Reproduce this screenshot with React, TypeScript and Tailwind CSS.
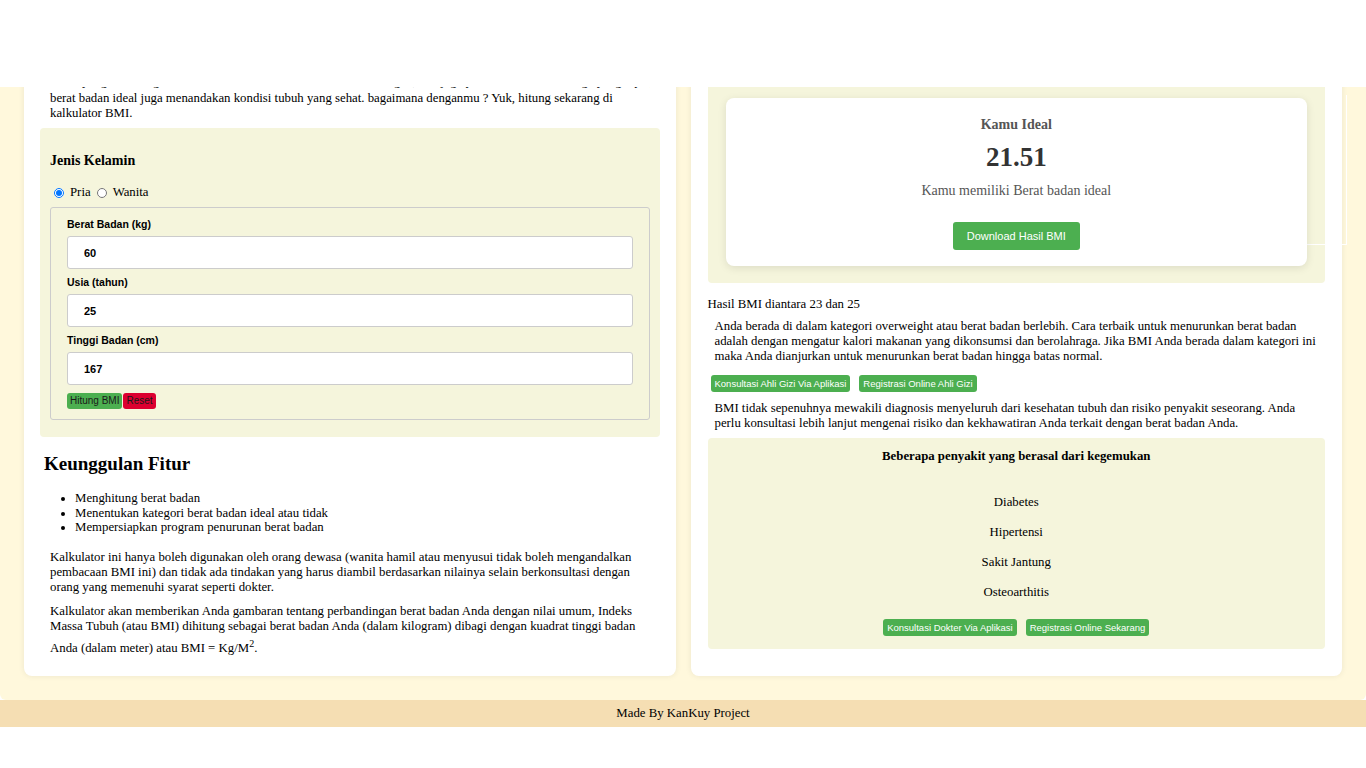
import React from 'react';

const SmallButton = ({ label, className = '' }: { label: string; className?: string }) => (
  <button className={`h-[17px] px-[4px] rounded-[3px] bg-[#4caf50] text-white text-[9.5px] leading-none font-['Liberation_Sans',sans-serif] ${className}`}>
    {label}
  </button>
);

const Field = ({ label, value }: { label: string; value: string }) => (
  <div>
    <label className="block text-[10.5px] font-bold leading-[12px] mb-[6px]">{label}</label>
    <input
      readOnly
      value={value}
      className="block w-full h-[33px] bg-white border border-[#ccc] rounded-[3px] pl-[16px] text-[11px] font-bold outline-none"
    />
  </div>
);

const LeftCard = () => (
  <section className="bg-white rounded-[8px] shadow-[0_0_6px_rgba(0,0,0,0.08)] px-[16px] pt-[16px] pb-[20px]">
    <div className="mt-[6px] pb-[3px] px-[10px] leading-[14px] overflow-hidden">
      <p className="whitespace-nowrap overflow-hidden">Kalkulator BMI membantu kamu mengetahui apakah berat badanmu sudah ideal atau belum sesuai tinggi badan</p>
      <p className="whitespace-nowrap overflow-hidden">Berat badan ideal adalah dambaan setiap orang, selain membuat penampilan lebih menarik dan percaya diri, memiliki</p>
      <p className="whitespace-nowrap overflow-hidden">tubuh yang seimbang membuat aktivitas sehari-hari terasa lebih ringan, menjaga pola makan dan olahraga yang tepat,</p>
    </div>
    <p className="px-[10px] leading-[15px] mb-[7px]">
      berat badan ideal juga menandakan kondisi tubuh yang sehat. bagaimana denganmu ? Yuk, hitung sekarang di kalkulator BMI.
    </p>

    <div className="bg-[#f5f5dc] rounded-[4px] px-[10px] pt-[25px] pb-[17px]">
      <h3 className="text-[14px] font-bold leading-[16px]">Jenis Kelamin</h3>
      <div className="mt-[16px] h-[16px] flex items-center">
        <input type="radio" name="jk" defaultChecked className="m-0 ml-[4px] w-[10px] h-[10px]" />
        <span className="ml-[6px]">Pria</span>
        <input type="radio" name="jk" className="m-0 ml-[6px] w-[10px] h-[10px]" />
        <span className="ml-[6px]">Wanita</span>
      </div>
      <div className="mt-[6px] border border-[#ccc] rounded-[3px] px-[16px] pt-[10px] pb-[10px] font-['Liberation_Sans',sans-serif] flex flex-col gap-[7px]">
        <Field label="Berat Badan (kg)" value="60" />
        <Field label="Usia (tahun)" value="25" />
        <Field label="Tinggi Badan (cm)" value="167" />
        <div className="flex gap-[1px] mt-[1px]">
          <button className="h-[16px] px-[3px] rounded-[3px] bg-[#4caf50] text-[#1a1a1a] text-[10px] leading-none">Hitung BMI</button>
          <button className="h-[16px] px-[3px] rounded-[3px] bg-[#dc0030] text-[#1a1a1a] text-[10px] leading-none">Reset</button>
        </div>
      </div>
    </div>

    <h2 className="mt-[16px] ml-[4px] text-[19px] font-bold leading-[22px]">Keunggulan Fitur</h2>
    <ul className="mt-[16px] pl-[35px] list-disc leading-[14.5px]">
      <li>Menghitung berat badan</li>
      <li>Menentukan kategori berat badan ideal atau tidak</li>
      <li>Mempersiapkan program penurunan berat badan</li>
    </ul>
    <p className="mt-[15px] px-[10px] leading-[15px]">
      Kalkulator ini hanya boleh digunakan oleh orang dewasa (wanita hamil atau menyusui tidak boleh mengandalkan pembacaan BMI
      ini) dan tidak ada tindakan yang harus diambil berdasarkan nilainya selain berkonsultasi dengan orang yang memenuhi syarat
      seperti dokter.
    </p>
    <p className="mt-[9px] px-[10px] leading-[15px]">
      Kalkulator akan memberikan Anda gambaran tentang perbandingan berat badan Anda dengan nilai umum, Indeks Massa Tubuh (atau
      BMI) dihitung sebagai berat badan Anda (dalam kilogram) dibagi dengan kuadrat tinggi badan Anda (dalam meter) atau BMI =
      Kg/M<sup className="align-super top-0 text-[10px] leading-[20px]">2</sup>.
    </p>
  </section>
);

const RightCard = () => (
  <section className="bg-white rounded-[8px] shadow-[0_0_6px_rgba(0,0,0,0.08)] px-[17px] pt-[16px] pb-[27px]">
    <div className="relative bg-[#f5f5dc] rounded-[4px] px-[18px] pt-[58px] pb-[17px]">
      <div className="absolute left-[500px] top-[55px] w-[139px] h-[150px] border-r border-b border-white" />
      <div className="relative bg-white rounded-[8px] shadow-[0_2px_8px_rgba(0,0,0,0.1)] pt-[19px] pb-[16px] flex flex-col items-center">
        <div className="text-[14px] font-bold leading-[16px] text-[#555]">Kamu Ideal</div>
        <div className="mt-[9px] text-[27px] font-bold leading-[31px] text-[#333]">21.51</div>
        <div className="mt-[10px] text-[14px] leading-[16px] text-[#555]">Kamu memiliki Berat badan ideal</div>
        <button className="mt-[23px] h-[28px] w-[127px] rounded-[3px] bg-[#4caf50] text-white text-[11px] font-['Liberation_Sans',sans-serif]">
          Download Hasil BMI
        </button>
      </div>
    </div>

    <div className="mt-[14px] leading-[15px]">Hasil BMI diantara 23 dan 25</div>
    <p className="mt-[7px] px-[7px] leading-[15px]">
      Anda berada di dalam kategori overweight atau berat badan berlebih. Cara terbaik untuk menurunkan berat badan adalah dengan
      mengatur kalori makanan yang dikonsumsi dan berolahraga. Jika BMI Anda berada dalam kategori ini maka Anda dianjurkan untuk
      menurunkan berat badan hingga batas normal.
    </p>
    <div className="mt-[11px] pl-[3px] flex gap-[9px]">
      <SmallButton label="Konsultasi Ahli Gizi Via Aplikasi" />
      <SmallButton label="Registrasi Online Ahli Gizi" />
    </div>
    <p className="mt-[9px] px-[7px] leading-[15px]">
      BMI tidak sepenuhnya mewakili diagnosis menyeluruh dari kesehatan tubuh dan risiko penyakit seseorang. Anda perlu
      konsultasi lebih lanjut mengenai risiko dan kekhawatiran Anda terkait dengan berat badan Anda.
    </p>

    <div className="mt-[7px] bg-[#f5f5dc] rounded-[4px] pt-[11px] pb-[13px] flex flex-col items-center text-center leading-[15px]">
      <div className="font-bold">Beberapa penyakit yang berasal dari kegemukan</div>
      <div className="mt-[31px]">Diabetes</div>
      <div className="mt-[15px]">Hipertensi</div>
      <div className="mt-[15px]">Sakit Jantung</div>
      <div className="mt-[15px]">Osteoarthitis</div>
      <div className="mt-[19px] flex gap-[9px]">
        <SmallButton label="Konsultasi Dokter Via Aplikasi" />
        <SmallButton label="Registrasi Online Sekarang" />
      </div>
    </div>
  </section>
);

export default function App() {
  return (
    <div className="min-h-screen bg-white text-black text-[12.8px] font-['Liberation_Serif',serif]">
      <header className="fixed top-0 left-0 right-0 h-[87px] bg-white z-20" />
      <main className="bg-[#fff8dc] rounded-b-[6px] px-[24px] pt-[24px] pb-[24px] grid grid-cols-2 gap-[15px]">
        <LeftCard />
        <RightCard />
      </main>
      <footer className="h-[27px] bg-[#f5deb3] text-center leading-[27px]">Made By KanKuy Project</footer>
    </div>
  );
}
